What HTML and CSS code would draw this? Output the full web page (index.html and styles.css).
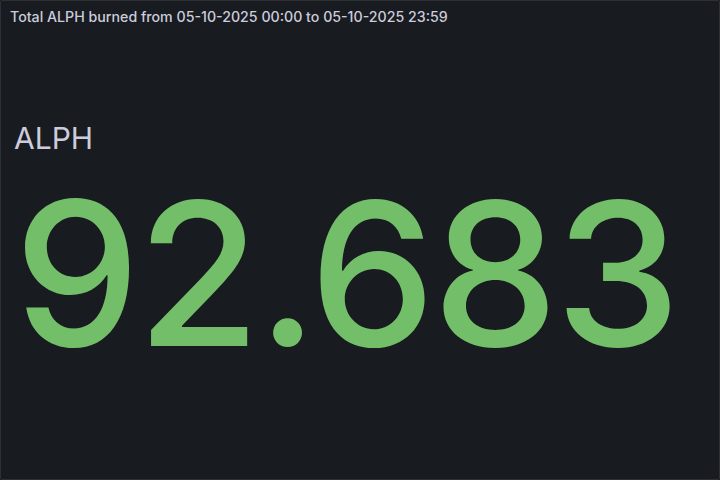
FILE: index.html
```html
<!DOCTYPE html>
<html>
<head>
<meta charset="utf-8">
<link rel="stylesheet" href="styles.css">
</head>
<body>
<div class="panel">
  <div class="header">Total ALPH burned from 05-10-2025 00:00 to 05-10-2025 23:59</div>
  <div class="content">
    <div class="label">ALPH</div>
    <div class="value">92.683</div>
  </div>
</div>
</body>
</html>
```
FILE: styles.css
```css
html, body {
  margin: 0;
  padding: 0;
  width: 720px;
  height: 480px;
  background: #111217;
}
.panel {
  box-sizing: border-box;
  width: 720px;
  height: 480px;
  background: #181b1f;
  border: 1px solid rgba(204, 204, 220, 0.12);
  border-radius: 2px;
  display: flex;
  flex-direction: column;
  font-family: Inter, "Noto Sans", sans-serif;
  color: #ccccdc;
}
.header {
  height: 32px;
  line-height: 32px;
  padding-left: 9px;
  font-size: 14.2px;
  font-weight: 500;
}
.content {
  flex: 1;
  display: flex;
  flex-direction: column;
  padding: 90px 13px 0;
}
.label {
  font-size: 30px;
  line-height: 30px;
  color: #ccccdc;
}
.value {
  font-size: 200px;
  line-height: 240px;
  color: #73bf69;
  font-weight: 500;
  letter-spacing: -3px;
}
```
